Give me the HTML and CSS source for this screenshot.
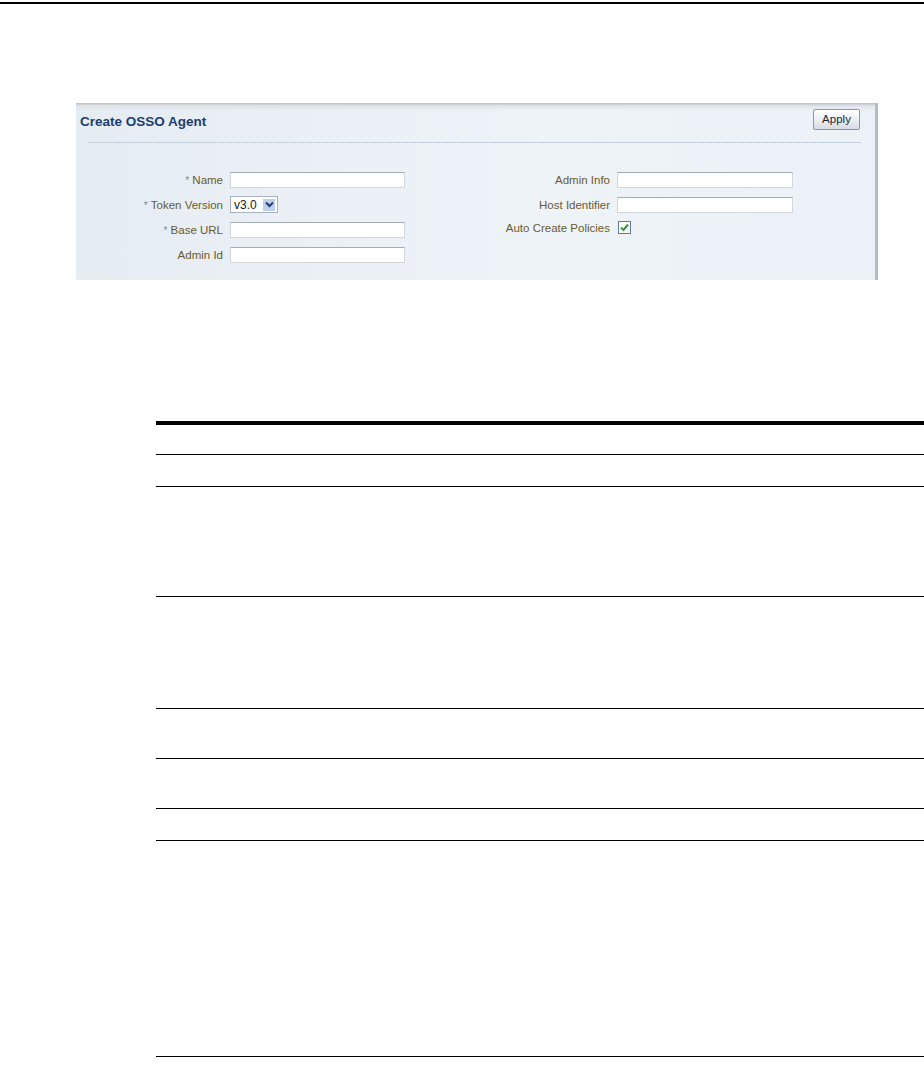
FILE: index.html
```html
<!DOCTYPE html>
<html>
	<head>
		<meta charset="utf-8">
		<title>Create OSSO Agent</title>
		<link rel="stylesheet" href="styles.css">
	</head>
	<body>
		<div class="toprule"></div>

		<div class="shot">
			<div class="panel">
				<div class="panelhead">
					<span class="paneltitle">Create OSSO Agent</span>
					<span class="applybtn">Apply</span>
				</div>
				<div class="sep"></div>

				<div class="formcols">
					<div class="formgrid leftgrid">
						<label class="lbl"><span class="req">*</span> Name</label>
						<span class="field"><span class="txt"></span></span>

						<label class="lbl"><span class="req">*</span> Token Version</label>
						<span class="field">
							<span class="choice">
								<span class="choiceval">v3.0</span>
								<span class="choicearrow">
									<svg width="11" height="11" viewBox="0 0 11 11"><path d="M2 3.5 L5.5 7 L9 3.5" fill="none" stroke="#1f3f78" stroke-width="2"/></svg>
								</span>
							</span>
						</span>

						<label class="lbl"><span class="req">*</span> Base URL</label>
						<span class="field"><span class="txt"></span></span>

						<label class="lbl">Admin Id</label>
						<span class="field"><span class="txt"></span></span>
					</div>

					<div class="formgrid rightgrid">
						<label class="lbl">Admin Info</label>
						<span class="field"><span class="txt wide"></span></span>

						<label class="lbl">Host Identifier</label>
						<span class="field"><span class="txt wide"></span></span>

						<label class="lbl lblcheck">Auto Create Policies</label>
						<span class="field">
							<span class="check">
								<svg width="11" height="11" viewBox="0 0 11 11"><path d="M2 5.5 L4.5 8 L9 2.5" fill="none" stroke="#2f9a2f" stroke-width="2"/></svg>
							</span>
						</span>
					</div>
				</div>
			</div>
		</div>

		<div class="doctable">
			<div class="trow r1"></div>
			<div class="trow r2"></div>
			<div class="trow r3"></div>
			<div class="trow r4"></div>
			<div class="trow r5"></div>
			<div class="trow r6"></div>
			<div class="trow r7"></div>
			<div class="trow r8"></div>
		</div>
	</body>
</html>
```

FILE: styles.css
```css
body {
	margin: 0;
	background: #ffffff;
	font-family: "Liberation Sans", Arial, sans-serif;
}

.toprule {
	margin-top: 2px;
	border-top: 2px solid #000000;
}

/* screenshot of the form */
.shot {
	margin: 99px 0 0 76px;
	width: 804px;
	height: 177px;
}
.panel {
	width: 799px;
	height: 177px;
	border-right: 3px solid #b3bcc6;
	background:
		linear-gradient(to bottom, #b7c0ca 0px, #dfe5eb 3px, rgba(255,255,255,0) 8px),
		linear-gradient(to right, rgba(226,233,240,0.6), rgba(246,248,251,0.3) 60%, rgba(236,241,246,0.6)),
		repeating-conic-gradient(#e3e9ef 0 25%, #f7f9fb 0 50%) 0 0 / 2px 2px;
}
.panelhead {
	display: flex;
	align-items: center;
	justify-content: space-between;
	height: 27px;
	padding: 3px 15px 0 4px;
}
.paneltitle {
	font-size: 13.5px;
	font-weight: bold;
	color: #1d3e6c;
	margin-top: 4px;
}
.applybtn {
	display: inline-block;
	width: 45px;
	height: 19px;
	line-height: 19px;
	text-align: center;
	font-size: 11.5px;
	color: #1b2733;
	border: 1px solid #8c98a5;
	border-radius: 2px;
	background: linear-gradient(to bottom, #ffffff, #e9edf1 60%, #d5dbe2);
}
.sep {
	margin: 9px 14px 0 12px;
	border-top: 1px solid #c7d1dc;
}

.formcols {
	display: flex;
	padding-top: 24px;
}
.formgrid {
	display: grid;
	grid-auto-rows: 25px;
	column-gap: 7px;
	align-items: center;
}
.leftgrid {
	grid-template-columns: 147px 175px;
}
.rightgrid {
	grid-template-columns: 205px 176px;
}
.lbl {
	text-align: right;
	font-size: 11.5px;
	color: #6a5a2e;
	white-space: nowrap;
}
.lblcheck {
	margin-bottom: 4px;
}
.req {
	color: #6f8aa8;
	font-size: 10px;
}
.field {
	display: flex;
	align-items: center;
}
.txt {
	display: block;
	width: 173px;
	height: 14px;
	background: #ffffff;
	border: 1px solid #d2d7dc;
	border-top-color: #a3abb3;
}
.txt.wide {
	width: 174px;
}

.choice {
	display: flex;
	align-items: center;
	width: 46px;
	height: 15px;
	background: #ffffff;
	border: 1px solid #a8b3bf;
	font-size: 12px;
	color: #1a1a1a;
}
.choiceval {
	padding-left: 3px;
	flex: 1;
}
.choicearrow {
	display: flex;
	align-items: center;
	justify-content: center;
	width: 12px;
	height: 12px;
	margin-right: 2px;
	background: #bdd0ec;
}

.check {
	display: flex;
	align-items: center;
	justify-content: center;
	width: 11px;
	height: 11px;
	margin: 0 0 4px 1px;
	background: #ffffff;
	border: 1px solid #5d7c9e;
}

/* empty document table */
.doctable {
	margin: 141px 0 0 156px;
	border-top: 4px solid #000000;
}
.trow {
	border-bottom: 1px solid #000000;
}
.r1 { height: 29px; }
.r2 { height: 31px; }
.r3 { height: 109px; }
.r4 { height: 111px; }
.r5 { height: 49px; }
.r6 { height: 49px; }
.r7 { height: 31px; }
.r8 { height: 215px; }
```
